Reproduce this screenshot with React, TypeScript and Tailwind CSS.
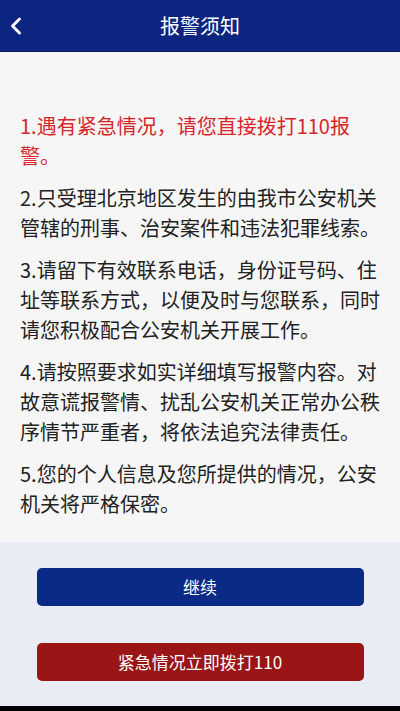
import { ChevronLeft } from "lucide-react";

const items = [
	"2.只受理北京地区发生的由我市公安机关管辖的刑事、治安案件和违法犯罪线索。",
	"3.请留下有效联系电话，身份证号码、住址等联系方式，以便及时与您联系，同时请您积极配合公安机关开展工作。",
	"4.请按照要求如实详细填写报警内容。对故意谎报警情、扰乱公安机关正常办公秩序情节严重者，将依法追究法律责任。",
	"5.您的个人信息及您所提供的情况，公安机关将严格保密。",
];

export default function App() {
	return (
		<div className="flex h-[711px] w-[400px] flex-col bg-black font-['Noto_Sans_CJK_SC','Noto_Sans',sans-serif]">
			<header className="relative flex h-[52px] shrink-0 items-center justify-center border-b border-[#061a5e] bg-[#0b2581]">
				<ChevronLeft className="absolute left-[2px] h-[28px] w-[28px] text-white" strokeWidth={2.5} />
				<h1 className="text-[20px] text-white">报警须知</h1>
			</header>

			<main className="h-[490px] shrink-0 overflow-hidden bg-[#f6f6f6] pl-[20px] pr-[14px] pt-[59px]">
				<p className="text-[20px] leading-[30px] text-[#d8242a]">
					1.遇有紧急情况，请您直接拨打110报警。
				</p>
				{items.map((t) => (
					<p key={t} className="mt-[12px] text-[20px] leading-[30px] text-[#222222]">
						{t}
					</p>
				))}
			</main>

			<div className="flex h-[164px] shrink-0 flex-col items-center gap-[37px] bg-[#e9ecf5] pt-[26px]">
				<button className="h-[38px] w-[327px] rounded-[5px] bg-[#0a2a86] text-[17px] text-white">
					继续
				</button>
				<button className="h-[38px] w-[327px] rounded-[5px] bg-[#9a1616] text-[17px] text-white">
					紧急情况立即拨打110
				</button>
			</div>
		</div>
	);
}
